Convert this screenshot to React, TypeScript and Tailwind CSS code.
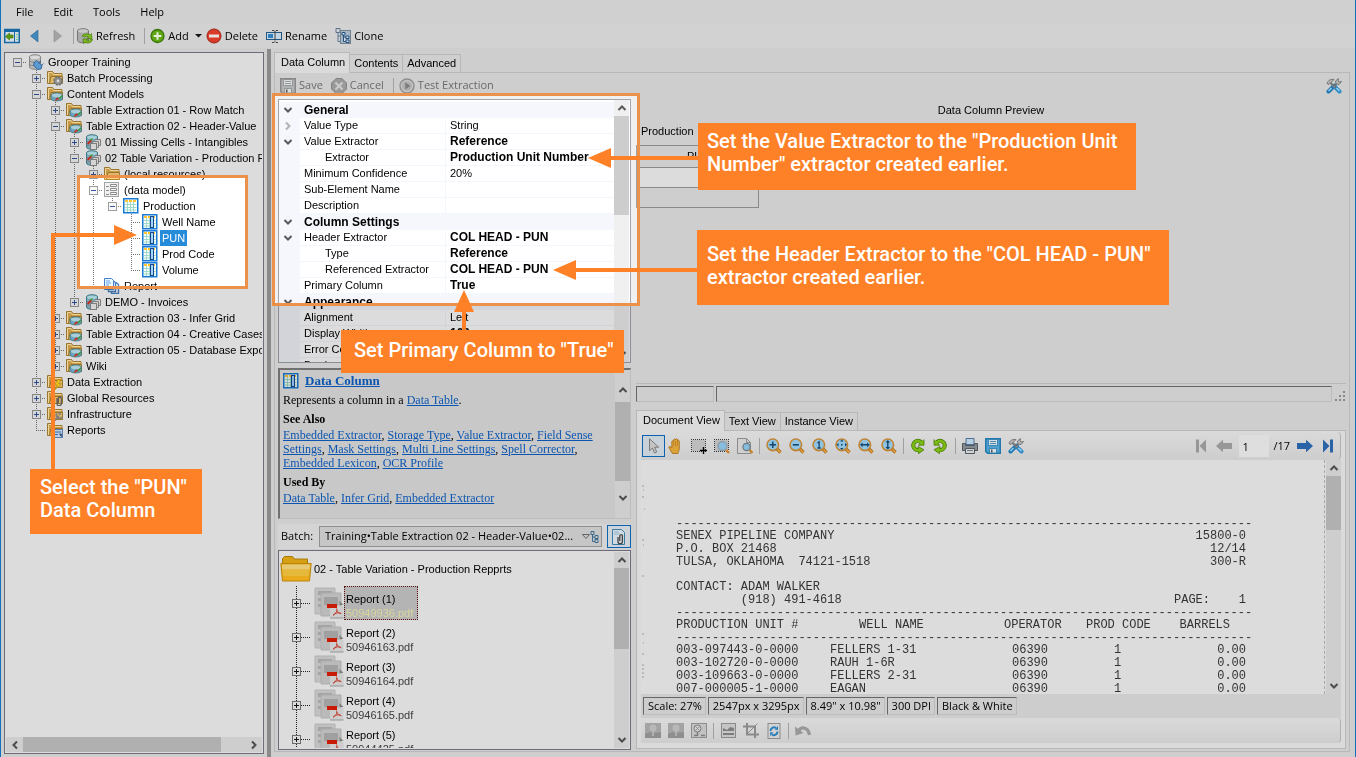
import type { ReactNode } from 'react';

type IconProps = { children: ReactNode; w?: number; h?: number; box?: string };

function Svg({ children, w = 16, h = 16, box }: IconProps) {
  return (
    <svg width={w} height={h} viewBox={box ?? `0 0 ${w} ${h}`} className="shrink-0" aria-hidden="true">
      {children}
    </svg>
  );
}

/* ---------- tree icons ---------- */

const folderOverlays: Record<string, ReactNode> = {
  gear: (
    <g>
      <circle cx="11" cy="11" r="4" fill="#8d8d8d" stroke="#6f6f6f" strokeDasharray="2 1.1" strokeWidth="1.5" />
      <circle cx="11" cy="11" r="1.4" fill="#d8d8d8" />
    </g>
  ),
  model: (
    <g>
      <path d="M4 9.5c0-3.4 11.5-3.4 11.5 0v3.2c0 3-11.5 3-11.5 0z" fill="#6ba3b8" stroke="#3f7488" strokeWidth=".8" />
      <ellipse cx="9.8" cy="9.4" rx="4.8" ry="1.8" fill="#a9cdd9" />
      <path d="M8.5 14.5l2-2.3 1.3 1" stroke="#c62a1c" strokeWidth="1.4" fill="none" />
      <path d="M12 13l3-3.2" stroke="#3f9a35" strokeWidth="1.4" />
    </g>
  ),
  bolt: <path d="M11 5.5L7.5 11h2.6L8 15.7l6.5-6h-3l2.3-4.2z" fill="#f0c21d" stroke="#a57b08" strokeWidth=".6" />,
  clip: (
    <path d="M10 8v5.5a2.2 2.2 0 0 0 4.4 0V8.5a1.5 1.5 0 0 0-3 0V13" fill="none" stroke="#5b5b5b" strokeWidth="1.3" />
  ),
  wrench: <path d="M6.5 15.5L12 10M10 7.5a3 3 0 0 0 5 3.6M11.5 6.2l2 2.6" fill="none" stroke="#85807a" strokeWidth="2" />,
  report: (
    <g>
      <rect x="6.5" y="7.5" width="9" height="8" fill="#b9cbe0" stroke="#5a7ea8" />
      <path d="M8 10h6M8 12.5h3M12.5 12h2v3" stroke="#3d6ba3" />
    </g>
  ),
  none: null,
};

function FolderIcon({ overlay }: { overlay: string }) {
  return (
    <Svg>
      <path d="M.5 13.5V1.5h5l1.5 2h8v10z" fill="#c79b48" stroke="#9a7530" />
      <path d="M1.500 13V2.500h3.500l1.500 2h8" fill="none" stroke="#ecd49a" />
      <path d="M2.500 13.500L4 6.500h11.500v7z" fill="#dcb868" stroke="#9a752c" />
      {folderOverlays[overlay]}
    </Svg>
  );
}

function DatabaseIcon({ kind }: { kind: 'root' | 'model' }) {
  const fill = kind === 'root' ? '#b9b9b9' : '#79a9b8';
  return (
    <Svg>
      <path d="M1.5 3c0-3 11-3 11 0v10c0 3-11 3-11 0z" fill={fill} stroke={kind === 'root' ? '#858585' : '#3e7587'} />
      <ellipse cx="7" cy="3.2" rx="5" ry="1.8" fill={kind === 'root' ? '#d9d9d9' : '#a6d0da'} />
      <path d="M1.5 6.5c0 2.5 11 2.5 11 0M1.5 10c0 2.5 11 2.5 11 0" fill="none" stroke="#6f7f85" strokeWidth=".8" />
      {kind === 'root' ? (
        <path
          d="M6.500 8l2-1.500 5.500 5-1 3.500-3.500.5-4-4.500zM13 7l-2 2.500M15.500 9.500L13 12"
          fill="#5c9bd2"
          stroke="#2a5f97"
          strokeWidth=".9"
        />
      ) : (
        <g>
          <path d="M2.5 10l4-4" stroke="#c9291a" strokeWidth="1.8" />
          <path d="M5 6.5l2.5-2" stroke="#3f9a35" strokeWidth="1.5" />
          <path d="M10 6v-.5h5.500v6H14" fill="#cfcfcf" stroke="#7c7c7c" />
          <path d="M7.500 9V7.500h6v6h-1" fill="#cfcfcf" stroke="#7c7c7c" />
          <rect x="5.500" y="9.500" width="6" height="6" fill="#d4d4d4" stroke="#7c7c7c" />
        </g>
      )}
    </Svg>
  );
}

function DataModelIcon() {
  return (
    <Svg>
      <rect x=".5" y=".5" width="14" height="14" fill="#cfcfcf" stroke="#8c8c8c" />
      <path d="M2 4.5h3M2 8.500h3M2 12.500h3" stroke="#777" />
      <path d="M6.500 2.500h6v2h-6zM6.500 6.500h6v2h-6zM6.500 10.500h6v2h-6z" fill="#d8d8d8" stroke="#777" />
    </Svg>
  );
}

function TableIcon({ column = false }: { column?: boolean }) {
  return (
    <Svg>
      <rect x=".75" y=".75" width="14" height="14" fill="#d4dcd8" stroke="#1769b4" strokeWidth="1.5" />
      <path d="M2 3h11.500" stroke="#e0a92c" strokeWidth="2" strokeDasharray="3 1" />
      <path d="M4.500 4v10M7.500 4v10M10.500 4v10M2 6.500h11.500M2 9.500h11.500M2 12h11.500" stroke="#7cb3a4" strokeWidth=".8" />
      {column && <rect x="8.500" y="2.500" width="3" height="11" fill="#8db6dd" stroke="#123f7a" />}
    </Svg>
  );
}

function ReportIcon() {
  return (
    <Svg>
      <path d="M.5.5h7l2 2v9h-9z" fill="#c8d6e6" stroke="#3c6ea8" />
      <path d="M2 3h4M2 5h5M2 7h3" stroke="#5b8cc0" />
      <path d="M4.500 11.500v2h7v-9l-2-1.500M7.500 13.500v2h7v-9l-2.500-2" fill="none" stroke="#3c6ea8" strokeWidth="1.4" />
    </Svg>
  );
}

/* ---------- toolbar icons ---------- */

function PanelIcon() {
  return (
    <Svg>
      <rect x=".75" y="1.5" width="14.5" height="13" fill="#d5dde3" stroke="#1769a6" strokeWidth="1.5" />
      <path d="M1 3h14" stroke="#1769a6" strokeWidth="2" />
      <path d="M10.500 4v10" stroke="#1769a6" />
      <path d="M12 6.500h2M12 9h2M12 11.500h2" stroke="#6c8" />
      <path d="M1.500 8.500l4-3.500v2h3.500v3H5.500v2z" fill="#5c9a12" stroke="#3d6b08" strokeWidth=".6" />
    </Svg>
  );
}

function RefreshIcon() {
  return (
    <Svg>
      <path d="M.5 3c0-3 11-3 11 0v9.500c0 3-11 3-11 0z" fill="#a9a9a9" stroke="#777" />
      <ellipse cx="6" cy="3" rx="4.8" ry="1.7" fill="#cacaca" />
      <path d="M5 8a5 4 0 0 1 8-1l1.500-1.500.5 5h-5l1.500-1.500A3 3 0 0 0 7.500 9z" fill="#7cba1e" stroke="#47790a" strokeWidth=".7" />
      <path
        d="M15.500 11.500a5 4 0 0 1-7.500 3L6.500 15.500 6 11h4.500L9.500 12.500c1 .8 2.500.5 3.500-1z"
        fill="#7cba1e"
        stroke="#47790a"
        strokeWidth=".7"
      />
    </Svg>
  );
}

function AddIcon() {
  return (
    <Svg>
      <circle cx="7.500" cy="8" r="6.500" fill="#5ea713" stroke="#3b740b" strokeWidth="1.3" />
      <path d="M7.500 4.200v7.600M3.700 8h7.600" stroke="#e6eedd" strokeWidth="2" />
    </Svg>
  );
}

function DeleteIcon() {
  return (
    <Svg>
      <circle cx="8" cy="8" r="7" fill="#d93b28" stroke="#9f2416" />
      <rect x="3" y="6.500" width="10" height="3" fill="#e9dfdd" />
    </Svg>
  );
}

function RenameIcon() {
  return (
    <Svg>
      <rect x=".5" y="4.500" width="15" height="7" fill="#c3d4e2" stroke="#24577f" />
      <rect x="2" y="6" width="5" height="4" fill="#2d7fc0" />
      <path d="M6 2.500h2l1 1 1-1h2M9 3.500v9M6 14.500h2l1-1 1 1h2" fill="none" stroke="#444" />
    </Svg>
  );
}

function CloneIcon() {
  return (
    <Svg>
      <path d="M1 .5h4v4H1zM3 4.500v9h3M3 8h3" fill="none" stroke="#5b7690" />
      <rect x="5.500" y="2.500" width="10" height="13" fill="#a7b6c5" stroke="#71808e" />
      <path d="M7 4.500h3v2.500H7zM11 8h3v2.500h-3zM11 12h3v2.500h-3zM8.500 7v6.500H11M8.500 9H11" fill="#d2dfec" stroke="#24507c" />
    </Svg>
  );
}

function SaveIcon({ on = false }: { on?: boolean }) {
  const c = on ? '#2377ab' : '#888';
  return (
    <Svg>
      <path d="M.75.75h14.500v14.500H2.500L.75 13.500z" fill={on ? '#4fa0cf' : '#b3b3b3'} stroke={c} strokeWidth="1.5" />
      <path d="M3.500 1.500h9v6h-9zM4.500 10.500h7v4.500h-7z" fill="#d9dee1" stroke={c} strokeWidth=".8" />
      <path d="M5 3.500h6M5 5.500h6" stroke={c} strokeWidth=".8" />
      <rect x="6" y="11.500" width="1.500" height="3" fill="#555" />
    </Svg>
  );
}

function CancelIcon() {
  return (
    <Svg>
      <path d="M5 .5h6L15.500 5v6L11 15.500H5L.5 11V5z" fill="#999" stroke="#828282" />
      <path d="M4.500 4.500l7 7M11.500 4.500l-7 7" stroke="#cbcbcb" strokeWidth="2.2" />
    </Svg>
  );
}

function PlayIcon() {
  return (
    <Svg>
      <circle cx="8" cy="8" r="7" fill="#c4c4c4" stroke="#8e8e8e" strokeWidth="1.4" />
      <circle cx="8" cy="8" r="4.800" fill="#adadad" />
      <path d="M6.300 4.500v7l5-3.500z" fill="#7c7c7c" />
    </Svg>
  );
}

function ToolsIcon() {
  return (
    <Svg>
      <path d="M2.500 13.500l6-6" stroke="#1f78b0" strokeWidth="4" strokeLinecap="round" />
      <path d="M13.500 13.500L8.500 8.500" stroke="#2e8cc6" strokeWidth="4" strokeLinecap="round" />
      <path d="M2.500 13l3-3M13.500 13l-3-3" stroke="#9ad0ec" strokeWidth="1.4" />
      <path d="M9 9L4 4.500" stroke="#777" strokeWidth="2.2" />
      <path d="M1 5.500C2 2 5 1 8 1.500L5.500 4 3 6.500z" fill="#b4b4b4" stroke="#626262" strokeWidth=".8" />
      <path
        d="M7.500 9l2.500-3-.5-3 3-2.500-.5 2.500 1 1 2.500-.5-2.500 3-3-.5-1 4z"
        fill="#b8b8b8"
        stroke="#626262"
        strokeWidth=".8"
      />
    </Svg>
  );
}

function CursorIcon() {
  return (
    <Svg>
      <path d="M3.500.8v12l3-2.800 2 5 2.200-1-2-4.800h4z" fill="#c4c4c4" stroke="#7b7b7b" />
    </Svg>
  );
}

function HandIcon() {
  return (
    <Svg>
      <path
        d="M4.500 15.500C3 13.500 1.500 11 .8 9c.8-1 2-.3 3 1V3.500c.3-1 1.500-1 1.800 0V1.800c.4-1 1.600-1 1.900 0v-.3c.4-1 1.700-1 2 0v1.300c.5-.8 1.500-.7 1.800.2v7c0 2.500-1 4-1.300 5.500z"
        fill="#dba23a"
        stroke="#a26c13"
        strokeWidth=".8"
      />
      <path d="M5.600 4v4M7.500 3v5M9.400 3v5" stroke="#b67b1e" strokeWidth=".7" />
    </Svg>
  );
}

function MarqueeIcon({ lens = false }: { lens?: boolean }) {
  return (
    <Svg>
      <rect x="1" y="2" width="13" height="11" fill="#bcbcbc" />
      <path d="M0 1.500H15M0 13.500H15M.5 1V14M14.500 1V14" stroke="#333" strokeDasharray="1 1" />
      {lens ? (
        <g>
          <path d="M12 12l3 3" stroke="#c98325" strokeWidth="2.4" />
          <circle cx="8.500" cy="8" r="4.500" fill="#86bcdd" stroke="#8f9aa2" strokeWidth="1.3" />
        </g>
      ) : (
        <path d="M12.500 9v7M9 12.500h7" stroke="#000" strokeWidth="1.4" />
      )}
    </Svg>
  );
}

function PageLensIcon() {
  return (
    <Svg>
      <path d="M.5.5h9l4 4v11H.5z" fill="#d0d0d0" stroke="#8b8b8b" />
      <path d="M9.500.5v4h4" fill="none" stroke="#8b8b8b" />
      <path d="M12.500 12l3 3" stroke="#c98325" strokeWidth="2.4" />
      <circle cx="9.500" cy="9" r="3.600" fill="#86bcdd" stroke="#6b7a84" strokeWidth="1.2" />
    </Svg>
  );
}

const lensMarks: Record<string, ReactNode> = {
  in: <path d="M6.800 3.500v6.500M3.500 6.800H10" stroke="#14456e" strokeWidth="1.5" />,
  out: <path d="M3.800 6.800h6" stroke="#14456e" strokeWidth="1.6" />,
  one: <path d="M5.500 5l1.600-1.200V10M5.500 10h3.200" fill="none" stroke="#14456e" strokeWidth="1.3" />,
  fit: (
    <path
      d="M6.800 1.500l1.700 2H5.100zM6.800 12l1.700-2H5.100zM1.500 6.800l2-1.700v3.400zM12 6.800l-2-1.700v3.400zM6 6h1.600v1.600H6z"
      fill="#14456e"
    />
  ),
  width: <path d="M2 6.800l2.500-2.400v1.700h4.600V4.400l2.500 2.400-2.500 2.400V7.500H4.500v1.700z" fill="#14456e" />,
  height: <path d="M6.800 2l2.400 2.500H7.500v4.600h1.700L6.800 11.600 4.400 9.100h1.700V4.500H4.400z" fill="#14456e" />,
};

function LensIcon({ mark }: { mark: string }) {
  return (
    <Svg>
      <path d="M11 11l3.500 3.500" stroke="#a86716" strokeWidth="3.2" />
      <path d="M11.500 11.500l3 3" stroke="#e8a744" strokeWidth="1.5" />
      <circle cx="6.800" cy="6.800" r="5.800" fill="#8fc3e0" stroke="#c08434" strokeWidth="1.6" />
      {lensMarks[mark]}
    </Svg>
  );
}

function RotateIcon({ flip = false }: { flip?: boolean }) {
  return (
    <Svg>
      <g transform={flip ? 'translate(15 0) scale(-1 1)' : undefined}>
        <path d="M12 5.500A4.600 4.600 0 1 0 8.500 12" fill="none" stroke="#477a06" strokeWidth="4" />
        <path d="M8 8.500l6 3.200-5.500 4z" fill="#7cba14" stroke="#477a06" strokeWidth=".8" />
        <path d="M14 1.500v5.700H8.300l2.200-2.200" fill="#7cba14" stroke="#477a06" strokeWidth=".8" />
        <path d="M12 5.500A4.600 4.600 0 1 0 9 12" fill="none" stroke="#7cba14" strokeWidth="2.6" />
      </g>
    </Svg>
  );
}

function PrintIcon() {
  return (
    <Svg>
      <path d="M4 .5h8v6H4z" fill="#b8cfe2" stroke="#4b6f92" />
      <path d="M.5 5.500h3v2h9v-2h3v7H.5z" fill="#828a91" stroke="#50575d" />
      <path d="M3.500 10.500h9v5h-9z" fill="#cfd4d8" stroke="#50575d" />
      <path d="M5 12.500h6" stroke="#777" />
    </Svg>
  );
}

function ArrowIcon({ dir, color, bar = false }: { dir: 'left' | 'right'; color: string; bar?: boolean }) {
  return (
    <Svg>
      <g transform={dir === 'left' ? 'translate(16 0) scale(-1 1)' : undefined}>
        {bar ? (
          <path d="M3 1.500L9.500 8 3 14.500zM10 1.500h3v13h-3z" fill={color} />
        ) : (
          <path d="M0 5h9V1.800L16 8l-7 6.200V11H0z" fill={color} />
        )}
      </g>
    </Svg>
  );
}

function PinIcon() {
  return (
    <Svg>
      <rect x="0" y="0" width="16" height="15" fill="#a3a3a3" />
      <path d="M0 11l5-2 4 1 7-1v6H0z" fill="#8e8e8e" />
      <circle cx="8" cy="5" r="3.500" fill="#b8b8b8" />
      <path d="M8 8v5" stroke="#bbb" strokeWidth="1.5" />
    </Svg>
  );
}

function InspectIcon() {
  return (
    <Svg>
      <rect x=".5" y=".5" width="15" height="14" fill="#c2c2c2" stroke="#8e8e8e" />
      <circle cx="6.500" cy="5.500" r="3.500" fill="#d0d0d0" stroke="#7c7c7c" />
      <path d="M4.500 3.500l4 4M8.500 3.500l-4 4" stroke="#8c8c8c" />
      <path d="M6.500 9v4M10 12.500h4M3 12.500h3" stroke="#7c7c7c" strokeWidth="1.5" />
    </Svg>
  );
}

function ImageIcon() {
  return (
    <Svg>
      <rect x="1.500" y=".5" width="14" height="14" fill="#c5c5c5" stroke="#8a8a8a" />
      <path d="M3 8V5l4 2 3-3 4 1v3zM3 10h11v2H3z" fill="#7d7d7d" />
    </Svg>
  );
}

function CropIcon() {
  return (
    <Svg>
      <path d="M4 0v11.500h12M0 3.500h12V15" fill="none" stroke="#8a8a8a" strokeWidth="2" />
      <path d="M14.500.5L5 10" stroke="#8a8a8a" />
    </Svg>
  );
}

function PageRefreshIcon() {
  return (
    <Svg>
      <rect x="2" y=".5" width="12" height="15" fill="#d2d2d2" stroke="#8b8b8b" />
      <path d="M4.500 8A3.500 3.500 0 0 1 10 5M11.500 8.500A3.500 3.500 0 0 1 6 11.500" fill="none" stroke="#2a7fbd" strokeWidth="2" />
      <path d="M8.500 6.500l3.500.5V3zM7.500 9.500L4 9.200V13z" fill="#2a7fbd" />
    </Svg>
  );
}

function UndoIcon() {
  return (
    <Svg>
      <path d="M3.500 8C6 3.500 13 3.500 14.500 12" fill="none" stroke="#979797" strokeWidth="3.2" />
      <path d="M0 3.500l.5 9 8-2.500z" fill="#979797" />
    </Svg>
  );
}

function PageClipIcon() {
  return (
    <Svg>
      <path d="M1.500.5h9l3 3v12h-12z" fill="#cfdae2" stroke="#3a7ba3" />
      <path d="M3 3h5M3 5h5" stroke="#8eb3cb" />
      <path d="M7 8v4.500a2.200 2.200 0 0 0 4.400 0V7a1.300 1.300 0 0 0-2.600 0v5" fill="none" stroke="#444" strokeWidth="1.3" />
    </Svg>
  );
}

function BigFolderIcon() {
  return (
    <Svg w={32} h={28}>
      <path d="M2.500 24V3.500l2-2h8l2 2.500h13v20z" fill="#d7a013" stroke="#a87a0c" />
      <path d="M4 8h25v4H4z" fill="#e8cf86" />
      <path d="M.8 8.500h30.400L29.500 26H2.500z" fill="#e9ab1c" stroke="#b8830d" />
      <path d="M2 9.500h28l-.4 5H2.400z" fill="#e6ca75" />
      <path d="M2.500 15h27l-.7 6H3.200z" fill="#e6b83c" />
    </Svg>
  );
}

function PdfStackIcon() {
  return (
    <Svg w={30} h={32}>
      <path d="M1 1h20v26H1z" fill="#c0c0c0" stroke="#b2b2b2" />
      <path d="M4 4h14v4H4zM4 11h3v3H4zM4 17h3v3H4z" fill="#a4a4a4" />
      <path d="M7 6h20v23H7z" fill="#bababa" stroke="#adadad" />
      <path d="M10 10h14v8H10z" fill="#a0a0a0" />
      <path d="M16 19h13.500v12H16z" fill="#cdcdcd" />
      <path d="M25.500 14l4 4h-4z" fill="#7c7c7c" />
      <path d="M16 31h13.500" stroke="#939393" />
      <rect x="13" y="17" width="10" height="4" fill="#c81b06" />
      <path
        d="M22.500 21.500c1 3-1 5.500-3.500 7M22.800 23c.8 2 2.500 3.500 4.500 3.800M19.500 27.500c2-1.500 4.500-2 7-1.500"
        fill="none"
        stroke="#c23a2c"
      />
    </Svg>
  );
}

/* ---------- shared bits ---------- */

function Chevron({ dir }: { dir: 'up' | 'down' | 'left' | 'right' }) {
  const d = {
    up: 'M1.500 7L5 3.500 8.500 7',
    down: 'M1.500 3L5 6.500 8.500 3',
    left: 'M7 1.500L3.500 5 7 8.500',
    right: 'M3 1.500L6.500 5 3 8.500',
  }[dir];
  return (
    <Svg w={10} h={10}>
      <path d={d} fill="none" stroke="currentColor" strokeWidth="2" />
    </Svg>
  );
}

function VScroll({ thumb }: { thumb: string }) {
  return (
    <div className="flex w-[15px] shrink-0 flex-col items-center bg-[#cecece] text-[#4c4c4c]">
      <button aria-label="Scroll up" className="flex h-4 w-full items-center justify-center">
        <Chevron dir="up" />
      </button>
      <div className="flex w-full flex-1 flex-col">
        <div className={`w-full bg-[#b0b0b0] ${thumb}`} />
      </div>
      <button aria-label="Scroll down" className="flex h-4 w-full items-center justify-center">
        <Chevron dir="down" />
      </button>
    </div>
  );
}

function Sep() {
  return <span className="-mx-px h-4 w-px shrink-0 bg-[#a0a0a0]" />;
}

function Tabs({ labels }: { labels: string[] }) {
  return (
    <div role="tablist" className="flex items-end">
      {labels.map((label, i) => (
        <button
          key={label}
          role="tab"
          aria-selected={i === 0}
          className={
            i === 0
              ? 'relative -mb-px h-[21px] border border-b-0 border-[#b8b8b8] bg-[#dadada] pr-1 pb-0.5 pl-1.5'
              : 'h-[18px] border border-b-0 border-l-0 border-[#b8b8b8] bg-[#cfcfcf] px-1'
          }
        >
          {label}
        </button>
      ))}
    </div>
  );
}

/* ---------- tree ---------- */

// guides: one character per indent cell
// " " empty, "|" line through, "t" branch, "l" last branch, "o" root
interface TreeNode {
  guides: string;
  toggle?: '+' | '-';
  icon: ReactNode;
  label: string;
  selected?: boolean;
}

const tree: TreeNode[] = [
  { guides: 'o', toggle: '-', icon: <DatabaseIcon kind="root" />, label: 'Grooper Training' },
  { guides: ' t', toggle: '+', icon: <FolderIcon overlay="gear" />, label: 'Batch Processing' },
  { guides: ' t', toggle: '-', icon: <FolderIcon overlay="model" />, label: 'Content Models' },
  { guides: ' |t', toggle: '+', icon: <FolderIcon overlay="model" />, label: 'Table Extraction 01 - Row Match' },
  { guides: ' |t', toggle: '-', icon: <FolderIcon overlay="model" />, label: 'Table Extraction 02 - Header-Value' },
  { guides: ' ||t', toggle: '+', icon: <DatabaseIcon kind="model" />, label: '01 Missing Cells - Intangibles' },
  { guides: ' ||t', toggle: '-', icon: <DatabaseIcon kind="model" />, label: '02 Table Variation - Production Reports' },
  { guides: ' |||t', toggle: '+', icon: <FolderIcon overlay="none" />, label: '(local resources)' },
  { guides: ' |||t', toggle: '-', icon: <DataModelIcon />, label: '(data model)' },
  { guides: ' ||||l', toggle: '-', icon: <TableIcon />, label: 'Production' },
  { guides: ' |||| t', icon: <TableIcon column />, label: 'Well Name' },
  { guides: ' |||| t', icon: <TableIcon column />, label: 'PUN', selected: true },
  { guides: ' |||| t', icon: <TableIcon column />, label: 'Prod Code' },
  { guides: ' |||| l', icon: <TableIcon column />, label: 'Volume' },
  { guides: ' |||l', icon: <ReportIcon />, label: 'Report' },
  { guides: ' ||l', toggle: '+', icon: <DatabaseIcon kind="model" />, label: 'DEMO - Invoices' },
  { guides: ' |t', toggle: '+', icon: <FolderIcon overlay="model" />, label: 'Table Extraction 03 - Infer Grid' },
  { guides: ' |t', toggle: '+', icon: <FolderIcon overlay="model" />, label: 'Table Extraction 04 - Creative Cases' },
  { guides: ' |t', toggle: '+', icon: <FolderIcon overlay="model" />, label: 'Table Extraction 05 - Database Export' },
  { guides: ' |l', toggle: '+', icon: <FolderIcon overlay="model" />, label: 'Wiki' },
  { guides: ' t', toggle: '+', icon: <FolderIcon overlay="bolt" />, label: 'Data Extraction' },
  { guides: ' t', toggle: '+', icon: <FolderIcon overlay="clip" />, label: 'Global Resources' },
  { guides: ' t', toggle: '+', icon: <FolderIcon overlay="wrench" />, label: 'Infrastructure' },
  { guides: ' l', icon: <FolderIcon overlay="report" />, label: 'Reports' },
];

const guidePaths: Record<string, string> = {
  ' ': '',
  '|': 'M9.500 0V16',
  t: 'M9.500 0V16M11 8.500H19',
  l: 'M9.500 0V9M11 8.500H19',
  o: 'M11 8.500H19',
};

function Guide({ kind, toggle }: { kind: string; toggle?: '+' | '-' }) {
  return (
    <Svg w={19}>
      <path d={guidePaths[kind]} stroke="#666" strokeDasharray="1 1" fill="none" />
      {toggle && (
        <g>
          <rect x="5.500" y="4.500" width="8" height="8" fill="#d6d6d6" stroke="#868686" />
          <path d={toggle === '+' ? 'M7 8.500h5M9.500 6v5' : 'M7 8.500h5'} stroke="#2d4a8a" />
        </g>
      )}
    </Svg>
  );
}

function TreePanel() {
  return (
    <aside className="mt-[3px] flex w-[260px] shrink-0 flex-col border border-[#6d6d7a] bg-[#dcdcdc] p-px">
      <ul className="min-h-0 flex-1 overflow-hidden">
        {tree.map(node => (
          <li key={node.label} className="flex h-4 items-center pl-0.5 whitespace-nowrap">
            {node.guides.split('').map((g, i) => (
              <Guide key={i} kind={g} toggle={i === node.guides.length - 1 ? node.toggle : undefined} />
            ))}
            <span className="ml-px flex">{node.icon}</span>
            <span
              className={
                node.selected ? 'ml-0.5 bg-[#2178bb] px-0.5 leading-4 text-[#dcdcdc]' : 'ml-0.5 px-0.5 leading-4'
              }
            >
              {node.label}
            </span>
          </li>
        ))}
      </ul>
      <div className="flex h-[15px] bg-[#cecece] text-[#4c4c4c]">
        <button aria-label="Scroll left" className="flex w-[17px] items-center justify-center">
          <Chevron dir="left" />
        </button>
        <div className="flex-1">
          <div className="h-full w-[89%] bg-[#b0b0b0]" />
        </div>
        <button aria-label="Scroll right" className="flex w-[17px] items-center justify-center">
          <Chevron dir="right" />
        </button>
      </div>
    </aside>
  );
}

/* ---------- property grid ---------- */

interface Property {
  name: string;
  value?: string;
  kind?: 'group' | 'nested';
  open?: boolean;
  closed?: boolean;
  plain?: boolean;
}

const properties: Property[] = [
  { name: 'General', kind: 'group', open: true },
  { name: 'Value Type', value: 'String', closed: true, plain: true },
  { name: 'Value Extractor', value: 'Reference', open: true },
  { name: 'Extractor', value: 'Production Unit Number', kind: 'nested' },
  { name: 'Minimum Confidence', value: '20%', plain: true },
  { name: 'Sub-Element Name' },
  { name: 'Description' },
  { name: 'Column Settings', kind: 'group', open: true },
  { name: 'Header Extractor', value: 'COL HEAD - PUN', open: true },
  { name: 'Type', value: 'Reference', kind: 'nested' },
  { name: 'Referenced Extractor', value: 'COL HEAD - PUN', kind: 'nested' },
  { name: 'Primary Column', value: 'True' },
  { name: 'Appearance', kind: 'group', open: true },
  { name: 'Alignment', value: 'Left', plain: true },
  { name: 'Display Width', value: '100' },
  { name: 'Error Color', value: '', plain: true },
  { name: 'Border Color', value: '', plain: true },
];

function PropertyGrid() {
  return (
    <div className="flex h-[264px] shrink-0 border border-[#8a8e94] bg-[#dcdcdc] pr-px">
      <div className="flex-1 overflow-hidden pt-0.5">
        <table className="w-full table-fixed border-separate border-spacing-0 leading-[15px]">
          <colgroup>
            <col className="w-[21px]" />
            <col className="w-[146px]" />
            <col />
          </colgroup>
          <tbody>
            {properties.map((p, i) => (
              <tr key={i} className="h-4">
                <td className="bg-[#d2d4d9] p-0 pl-1 text-[#4c4c4c]">
                  {p.open && <Chevron dir="down" />}
                  {p.closed && (
                    <span className="text-[#999]">
                      <Chevron dir="right" />
                    </span>
                  )}
                </td>
                {p.kind === 'group' ? (
                  <th colSpan={2} className="bg-[#d2d4d9] p-0 pl-1 text-left text-xs leading-[15px] font-bold">
                    {p.name}
                  </th>
                ) : (
                  <>
                    <th
                      className={
                        p.kind === 'nested'
                          ? 'border-r border-b border-[#d0d4da] p-0 pl-[25px] text-left font-normal'
                          : 'border-r border-b border-[#d0d4da] p-0 pl-1 text-left font-normal'
                      }
                    >
                      {p.name}
                    </th>
                    <td
                      className={
                        p.plain
                          ? 'border-b border-[#d0d4da] p-0 pl-1'
                          : 'border-b border-[#d0d4da] p-0 pl-1 text-xs leading-[15px] font-bold'
                      }
                    >
                      {p.value}
                    </td>
                  </>
                )}
              </tr>
            ))}
          </tbody>
        </table>
      </div>
      <VScroll thumb="h-[99px]" />
    </div>
  );
}

/* ---------- help ---------- */

function HelpLinks({ items }: { items: string[] }) {
  return (
    <p>
      {items.map((item, i) => (
        <span key={item}>
          {i > 0 && ', '}
          <a href="#" className="text-[#0b55b0] underline">
            {item}
          </a>
        </span>
      ))}
    </p>
  );
}

function HelpPanel() {
  return (
    <div className="mt-[5px] flex h-[151px] shrink-0 border border-t-2 border-l-2 border-[#bdbdbd] border-t-[#707070] border-l-[#707070] bg-[#c8c8c8] font-['Liberation_Serif',serif] text-xs leading-[14px]">
      <div className="flex-1 overflow-hidden pt-[3px] pl-[3px]">
        <h2 className="flex items-center gap-1.5 text-[13px] font-bold">
          <TableIcon column />
          <a href="#" className="text-[#0b55b0] underline">
            Data Column
          </a>
        </h2>
        <p className="mt-1">
          Represents a column in a{' '}
          <a href="#" className="text-[#0b55b0] underline">
            Data Table
          </a>
          .
        </p>
        <h3 className="mt-[5px] font-bold">See Also</h3>
        <div className="mt-0.5 max-w-[326px]">
          <HelpLinks
            items={[
              'Embedded Extractor',
              'Storage Type',
              'Value Extractor',
              'Field Sense Settings',
              'Mask Settings',
              'Multi Line Settings',
              'Spell Corrector',
              'Embedded Lexicon',
              'OCR Profile',
            ]}
          />
        </div>
        <h3 className="mt-[5px] font-bold">Used By</h3>
        <div className="mt-0.5">
          <HelpLinks items={['Data Table', 'Infer Grid', 'Embedded Extractor']} />
        </div>
      </div>
      <div className="flex bg-[#cecece] py-3">
        <VScroll thumb="mt-1 h-[79px]" />
      </div>
    </div>
  );
}

/* ---------- batch ---------- */

const reports = [
  { name: 'Report (1)', file: '50949936.pdf' },
  { name: 'Report (2)', file: '50946163.pdf' },
  { name: 'Report (3)', file: '50946164.pdf' },
  { name: 'Report (4)', file: '50946165.pdf' },
  { name: 'Report (5)', file: '50944425.pdf' },
];

function BatchPicker() {
  return (
    <div className="mt-[5px] mb-px flex h-[25px] shrink-0 items-center bg-[#d4d4d4] pl-[3px] font-['Open_Sans',sans-serif] text-[11px]">
      <label htmlFor="batch" className="w-[38px]">
        Batch:
      </label>
      <div className="flex h-[21px] flex-1 items-center border border-[#909090] bg-[#c6c6c6] pr-0.5">
        <select id="batch" className="min-w-0 flex-1 appearance-none truncate bg-transparent pl-[5px]">
          <option>Training•Table Extraction 02 - Header-Value•02...</option>
        </select>
        <Svg w={18} h={12}>
          <path d="M1.500 3.500h7l-3.500 4z" fill="none" stroke="#666" />
          <path d="M10 .5h3v3h-3zM14 4.500h3v3h-3zM14 8.500h3v3h-3zM11.500 4v6.500H14M11.500 6H14" fill="none" stroke="#3b6b8d" />
        </Svg>
      </div>
      <button
        aria-label="Batch attachments"
        className="ml-[5px] flex h-[23px] w-6 items-center justify-center border border-[#0b62b0] bg-[#ccd3d9]"
      >
        <PageClipIcon />
      </button>
    </div>
  );
}

function BatchList() {
  return (
    <div className="flex min-h-0 flex-1 border border-[#6d6d7a] bg-[#dcdcdc] p-px">
      <div className="flex-1 overflow-hidden">
        <div className="flex h-[34px] items-center">
          <BigFolderIcon />
          <span className="ml-0.5">02 - Table Variation - Production Repprts</span>
        </div>
        <ul>
          {reports.map((r, i) => (
            <li key={r.name} className="flex h-[34px] pl-3">
              <Svg w={22} h={34}>
                <path d="M4.500 0V34M9 17.500H19" stroke="#222" strokeDasharray="1 1" />
                <rect x=".5" y="13.500" width="8" height="8" fill="#dcdcdc" stroke="#6c6c6c" />
                <path d="M2 17.500h5M4.500 15v5" stroke="#111" />
              </Svg>
              <span className="pt-px">
                <PdfStackIcon />
              </span>
              <span
                className={
                  i === 0
                    ? 'flex h-[34px] w-[74px] flex-col border border-dotted border-[#5a1010] bg-[#b4b4b4] pt-[5px] pl-px leading-[14px]'
                    : 'flex h-[34px] flex-col pt-1.5 pl-0.5 leading-[14px]'
                }
              >
                <span>{r.name}</span>
                <span className={i === 0 ? 'text-[#d9d69c]' : 'text-[#3c3c3c]'}>{r.file}</span>
              </span>
            </li>
          ))}
        </ul>
      </div>
      <VScroll thumb="h-[81px]" />
    </div>
  );
}

/* ---------- preview and document ---------- */

function Preview() {
  return (
    <section className="flex h-[285px] shrink-0 flex-col border-b border-[#b8b8b8]">
      <h2 className="pt-0.5 text-center leading-[18px]">Data Column Preview</h2>
      <table className="mt-0.5 w-[123px] border-collapse text-left">
        <caption className="h-6 pl-[5px] text-left leading-5">Production</caption>
        <tbody>
          <tr className="h-[22px] border border-[#8a8a8a]">
            <th className="p-0 pl-[50px] font-normal">PUN</th>
          </tr>
          <tr className="h-5 border border-[#8a8a8a] bg-[#dcdcdc]">
            <td />
          </tr>
          <tr className="h-5 border border-[#8a8a8a]">
            <td />
          </tr>
        </tbody>
      </table>
    </section>
  );
}

const wells = [
  ['003-097443-0-0000', 'FELLERS 1-31', '06390', '1', '0.00'],
  ['003-102720-0-0000', 'RAUH 1-6R', '06390', '1', '0.00'],
  ['003-109663-0-0000', 'FELLERS 2-31', '06390', '1', '0.00'],
  ['007-000005-1-0000', 'EAGAN', '06390', '1', '0.00'],
];

function Rule() {
  return <div className="h-3 leading-3">{'-'.repeat(80)}</div>;
}

function DocumentPage() {
  return (
    <div className="flex min-h-0 flex-1 bg-[#dcdcdc]">
      <Svg w={6} h={220}>
        <path d="M1 26h2M2 30h1M1 37h2M3 49h1M1 80h2M2 85h1M1 116h2M1 174h2M2 183h1M1 194h2M2 204v14" stroke="#9a9a9a" strokeDasharray="2 2" />
      </Svg>
      <div className="flex-1 overflow-hidden">
        <div className="pt-[58px] pl-[29px] font-['Liberation_Mono',monospace] text-xs leading-[13px] whitespace-pre text-[#333]">
          <Rule />
          <div className="flex w-[570px] justify-between">
            <div>
              <p>SENEX PIPELINE COMPANY</p>
              <p>P.O. BOX 21468</p>
              <p>{'TULSA, OKLAHOMA  74121-1518'}</p>
            </div>
            <div className="text-right">
              <p>15800-0</p>
              <p>12/14</p>
              <p>300-R</p>
            </div>
          </div>
          <div className="mt-3 flex w-[570px] items-end justify-between">
            <div>
              <p>CONTACT: ADAM WALKER</p>
              <p>{'         (918) 491-4618'}</p>
            </div>
            <p>{'PAGE:    1'}</p>
          </div>
          <Rule />
          <table className="w-[570px] table-fixed border-collapse text-left">
            <colgroup>
              <col className="w-[154px]" />
              <col className="w-[174px]" />
              <col className="w-[82px]" />
              <col className="w-[90px]" />
              <col className="w-[70px]" />
            </colgroup>
            <thead>
              <tr>
                <th className="p-0 font-normal">PRODUCTION UNIT #</th>
                <th className="p-0 pl-[29px] font-normal">WELL NAME</th>
                <th className="p-0 font-normal">OPERATOR</th>
                <th className="p-0 font-normal">PROD CODE</th>
                <th className="p-0 pr-4 text-right font-normal">BARRELS</th>
              </tr>
            </thead>
            <tbody>
              <tr>
                <td colSpan={5} className="p-0">
                  <Rule />
                </td>
              </tr>
              {wells.map(([unit, name, operator, code, barrels]) => (
                <tr key={unit}>
                  <td className="p-0">{unit}</td>
                  <td className="p-0">{name}</td>
                  <td className="p-0 pl-2">{operator}</td>
                  <td className="p-0 pl-7">{code}</td>
                  <td className="p-0 text-right">{barrels}</td>
                </tr>
              ))}
            </tbody>
          </table>
        </div>
      </div>
      <div className="mr-px border-l border-dashed border-[#a8a8a8]" />
      <VScroll thumb="h-[54px]" />
    </div>
  );
}

const viewerTools = [
  ['Pan', <HandIcon />],
  ['Select region', <MarqueeIcon />],
  ['Zoom region', <MarqueeIcon lens />],
  ['Find', <PageLensIcon />],
  null,
  ['Zoom in', <LensIcon mark="in" />],
  ['Zoom out', <LensIcon mark="out" />],
  ['Actual size', <LensIcon mark="one" />],
  ['Fit page', <LensIcon mark="fit" />],
  ['Fit width', <LensIcon mark="width" />],
  ['Fit height', <LensIcon mark="height" />],
  null,
  ['Rotate left', <RotateIcon />],
  ['Rotate right', <RotateIcon flip />],
  null,
  ['Print', <PrintIcon />],
  ['Save image', <SaveIcon on />],
  ['Options', <ToolsIcon />],
] as const;

const imageTools = [
  ['Pin', <PinIcon />],
  ['Pin all', <PinIcon />],
  ['Inspect', <InspectIcon />],
  null,
  ['Image', <ImageIcon />],
  ['Crop', <CropIcon />],
  ['Reload', <PageRefreshIcon />],
  null,
  ['Undo', <UndoIcon />],
] as const;

function ToolRow({ tools }: { tools: typeof viewerTools | typeof imageTools }) {
  return (
    <>
      {tools.map((tool, i) =>
        tool ? (
          <button key={i} aria-label={tool[0]} className="shrink-0">
            {tool[1]}
          </button>
        ) : (
          <Sep key={i} />
        ),
      )}
    </>
  );
}

function DocumentViewer() {
  return (
    <section className="mt-2 mb-px flex min-h-0 flex-1 flex-col">
      <Tabs labels={['Document View', 'Text View', 'Instance View']} />
      <div className="flex min-h-0 flex-1 flex-col border border-[#b8b8b8] bg-[#dadada] px-1 pt-px pb-[5px]">
        <div className="flex h-7 shrink-0 items-center gap-[7px] rounded-r border-r border-[#b0b0b0] bg-linear-to-b from-[#dadada] to-[#cdcdcd] pr-1 pl-px">
          <button
            aria-label="Select"
            className="-mr-1 flex h-[22px] w-[23px] shrink-0 items-center justify-center border border-[#0b62b0] bg-[#c9d1d8]"
          >
            <CursorIcon />
          </button>
          <ToolRow tools={viewerTools} />
          <span className="flex-1" />
          <button aria-label="First page" className="shrink-0">
            <ArrowIcon dir="left" color="#979797" bar />
          </button>
          <button aria-label="Previous page" className="shrink-0">
            <ArrowIcon dir="left" color="#979797" />
          </button>
          <div className="flex items-center font-['Open_Sans',sans-serif] text-[11px]">
            <input aria-label="Page" defaultValue="1" className="mr-1 h-[22px] w-[30px] bg-[#dedede] pl-[3px]" />
            /17
          </div>
          <button aria-label="Next page" className="shrink-0">
            <ArrowIcon dir="right" color="#2a63a8" />
          </button>
          <button aria-label="Last page" className="shrink-0">
            <ArrowIcon dir="right" color="#2a63a8" bar />
          </button>
        </div>
        <DocumentPage />
        <div className="flex h-6 shrink-0 items-center gap-0.5 bg-[#cdcdcd] pl-0.5 font-['Open_Sans',sans-serif] text-[11px] leading-4">
          {['Scale: 27%', '2547px x 3295px', '8.49" x 10.98"', '300 DPI', 'Black & White'].map(s => (
            <span key={s} className="border border-[#bcbcbc] border-t-[#666] border-l-[#666] pr-[3px] pl-1">
              {s}
            </span>
          ))}
        </div>
        <div className="flex h-[25px] shrink-0 items-center gap-[7px] rounded-r border-r border-[#b0b0b0] bg-linear-to-b from-[#dadada] to-[#cdcdcd] pl-1">
          <ToolRow tools={imageTools} />
        </div>
      </div>
    </section>
  );
}

/* ---------- annotations ---------- */

function Highlight({ className }: { className: string }) {
  return (
    <div className={`pointer-events-none absolute border-3 border-[#ec9149] ${className}`}>
      <div className="h-full w-full bg-[#242424] mix-blend-color-dodge" />
    </div>
  );
}

function Callout({ className, children }: { className: string; children: ReactNode }) {
  return (
    <p
      className={`absolute bg-[#ff8127] font-['Roboto',sans-serif] text-xl leading-[23px] font-medium whitespace-nowrap text-white ${className}`}
    >
      {children}
    </p>
  );
}

function Arrows() {
  return (
    <svg width="720" height="500" viewBox="1 0 720 500" className="pointer-events-none absolute top-0 left-0" aria-hidden="true">
      <g fill="none" stroke="#ff8127" strokeWidth="4">
        <path d="M53 470V235H116" />
        <path d="M699 158H608" />
        <path d="M698 270H572" />
        <path d="M464 332V310" />
      </g>
      <g fill="#ff8127">
        <path d="M114 225L137 235 114 245z" />
        <path d="M611 148L588 158 611 168z" />
        <path d="M576 260L553 270 576 280z" />
        <path d="M454 312L464 290 474 312z" />
      </g>
    </svg>
  );
}

export default function App() {
  return (
    <div className="relative isolate flex h-screen min-h-[640px] flex-col overflow-hidden border-x border-[#1470bc] bg-[#cecece] font-['Liberation_Sans',sans-serif] text-[11px] text-black">
      <nav className="flex h-6 shrink-0 items-center gap-5 bg-[#d0d0d0] pl-[15px] font-['Open_Sans',sans-serif]">
        <button>File</button>
        <button>Edit</button>
        <button>Tools</button>
        <button>Help</button>
      </nav>

      <div className="flex h-6 shrink-0 items-center bg-[#d2d2d2] pl-[3px] font-['Open_Sans',sans-serif]">
        <button aria-label="Toggle tree">
          <PanelIcon />
        </button>
        <button aria-label="Back" className="ml-2.5">
          <Svg w={9}>
            <path d="M8 2v12L.5 8z" fill="#3f86bb" stroke="#2b6490" strokeWidth=".6" />
          </Svg>
        </button>
        <button aria-label="Forward" className="mr-3 ml-3.5">
          <Svg w={9}>
            <path d="M1 2v12l7.500-6z" fill="#a3a3a3" stroke="#8a8a8a" strokeWidth=".6" />
          </Svg>
        </button>
        <Sep />
        <button className="mr-2.5 ml-1 flex items-center gap-[3px]">
          <RefreshIcon />
          Refresh
        </button>
        <Sep />
        <button className="ml-1.5 flex items-center gap-0.5">
          <AddIcon />
          <span className="mr-1">Add</span>
          <Svg w={7} h={4}>
            <path d="M0 0h7L3.500 3.500z" fill="#111" />
          </Svg>
        </button>
        <button className="ml-1 flex items-center gap-[3px]">
          <DeleteIcon />
          Delete
        </button>
        <button className="ml-2 flex items-center gap-[3px]">
          <RenameIcon />
          Rename
        </button>
        <button className="ml-2 flex items-center gap-[3px]">
          <CloneIcon />
          Clone
        </button>
      </div>

      <main className="flex min-h-0 flex-1 pt-px pr-[5px] pl-[3px]">
        <div className="flex pb-[3px]">
          <TreePanel />
        </div>
        <div className="mx-[3px] w-1 shrink-0 bg-[#8a8a8a]" />
        <div className="flex min-w-0 flex-1 flex-col pt-[3px] pb-[5px]">
          <Tabs labels={['Data Column', 'Contents', 'Advanced']} />
          <div className="flex min-h-0 flex-1 flex-col border border-[#b8b8b8] px-[3px]">
            <div className="flex h-[26px] shrink-0 items-center pr-1 pb-px pl-0.5 font-['Open_Sans',sans-serif] text-[#6a6a6a]">
              <button className="flex items-center gap-[3px]">
                <SaveIcon />
                Save
              </button>
              <button className="mr-2.5 ml-2 flex items-center gap-[3px]">
                <CancelIcon />
                Cancel
              </button>
              <Sep />
              <button className="ml-1.5 flex items-center gap-[3px]">
                <PlayIcon />
                Test Extraction
              </button>
              <span className="flex-1" />
              <button aria-label="Preview options">
                <ToolsIcon />
              </button>
            </div>
            <div className="flex min-h-0 flex-1 gap-[5px] pb-px">
              <div className="flex w-[353px] shrink-0 flex-col">
                <PropertyGrid />
                <HelpPanel />
                <BatchPicker />
                <BatchList />
              </div>
              <div className="flex min-w-0 flex-1 flex-col">
                <Preview />
                <div className="mt-0.5 flex h-4 shrink-0 items-end gap-0.5">
                  <div className="h-full w-[78px] border border-[#bcbcbc] border-t-[#666] border-l-[#666]" />
                  <div className="h-full flex-1 border border-[#bcbcbc] border-t-[#666] border-l-[#666]" />
                  <Svg w={12} h={12}>
                    <path d="M9 1h2v2H9zM5 5h2v2H5zM9 5h2v2H9zM1 9h2v2H1zM5 9h2v2H5zM9 9h2v2H9z" fill="#8a8a8a" />
                  </Svg>
                </div>
                <DocumentViewer />
              </div>
            </div>
          </div>
        </div>
      </main>

      <Highlight className="top-[175px] left-[76px] h-[114px] w-[171px]" />
      <Highlight className="top-[93px] left-[271px] h-[213px] w-[368px]" />
      <Arrows />
      <Callout className="top-[469px] left-[29px] h-[65px] w-[172px] pt-[7px] pl-2.5">
        Select the "PUN"
        <br />
        Data Column
      </Callout>
      <Callout className="top-[123px] left-[697px] h-[67px] w-[438px] pt-[7px] pl-[9px]">
        Set the Value Extractor to the "Production Unit
        <br />
        Number" extractor created earlier.
      </Callout>
      <Callout className="top-[230px] left-[696px] h-[75px] w-[472px] pt-[13px] pl-2.5">
        Set the Header Extractor to the "COL HEAD - PUN"
        <br />
        extractor created earlier.
      </Callout>
      <Callout className="top-[330px] left-[340px] h-[43px] w-[283px] pt-[9px] pl-[13px]">
        Set Primary Column to "True"
      </Callout>
    </div>
  );
}
